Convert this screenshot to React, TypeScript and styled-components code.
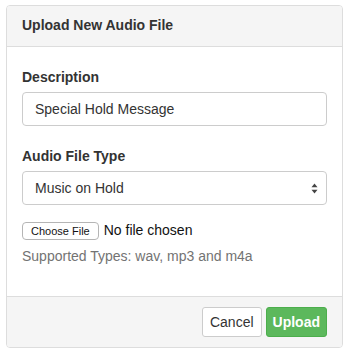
import React, { useState } from "react";
import styled, { createGlobalStyle } from "styled-components";

const GlobalStyle = createGlobalStyle`
  html, body {
    margin: 0;
    padding: 0;
    background: #fff;
  }
  body {
    font-family: "Liberation Sans", Arial, sans-serif;
    font-size: 14px;
    line-height: 20px;
    color: #333;
  }
  * {
    box-sizing: border-box;
  }
`;

const Page = styled.div`
  padding: 5px 7px 7px 6px;
`;

const Panel = styled.div`
  border: 1px solid #ddd;
  border-radius: 4px;
  background: #fff;
  overflow: hidden;
`;

const Heading = styled.div`
  background: #f5f5f5;
  border-bottom: 1px solid #ddd;
  padding: 9px 15px 10px;
  height: 41px;
`;

const Title = styled.h3`
  margin: 0;
  font-size: 14px;
  line-height: 20px;
  font-weight: bold;
  color: #333;
`;

const Body = styled.div`
  padding: 20px 15px 30px;
`;

const FormGroup = styled.div<{ $gap?: number }>`
  margin-bottom: ${(p) => p.$gap ?? 20}px;
`;

const Label = styled.label`
  display: block;
  margin-bottom: 5px;
  font-weight: bold;
  color: #333;
`;

const TextInput = styled.input`
  display: block;
  width: 100%;
  height: 34px;
  padding: 6px 12px;
  font-family: inherit;
  font-size: 14px;
  color: #333;
  border: 1px solid #ccc;
  border-radius: 4px;
  outline: none;
  background: #fff;
`;

const SelectWrap = styled.div`
  position: relative;
`;

const Select = styled.select`
  display: block;
  width: 100%;
  height: 34px;
  padding: 6px 12px;
  font-family: inherit;
  font-size: 14px;
  color: #333;
  border: 1px solid #ccc;
  border-radius: 4px;
  background: #fff;
  appearance: none;
  -webkit-appearance: none;
  outline: none;
`;

const Arrows = styled.svg`
  position: absolute;
  right: 9px;
  top: 12px;
  pointer-events: none;
`;

const FileRow = styled.div`
  display: flex;
  align-items: center;
  gap: 5px;
  height: 21px;
`;

const FileButton = styled.button`
  height: 18px;
  margin-top: 1px;
  padding: 0 8px;
  font-family: inherit;
  font-size: 11px;
  line-height: 16px;
  color: #111;
  background: #fff;
  border: 1px solid #b5b5b5;
  border-radius: 4px;
  cursor: pointer;
`;

const FileName = styled.span`
  font-size: 14px;
  color: #111;
  margin-top: -2px;
`;

const Help = styled.p`
  margin: 5px 0 0;
  color: #737373;
`;

const Footer = styled.div`
  display: flex;
  justify-content: flex-end;
  gap: 4px;
  padding: 10px 15px;
  background: #f5f5f5;
  border-top: 1px solid #ddd;
`;

const Button = styled.button<{ $primary?: boolean }>`
  height: 30px;
  padding: 0 ${(p) => (p.$primary ? 6 : 7)}px;
  font-family: inherit;
  font-size: 14px;
  font-weight: ${(p) => (p.$primary ? "bold" : "normal")};
  color: ${(p) => (p.$primary ? "#fff" : "#333")};
  background: ${(p) => (p.$primary ? "#5cb85c" : "#fff")};
  border: 1px solid ${(p) => (p.$primary ? "#4cae4c" : "#ccc")};
  border-radius: 3px;
  cursor: pointer;
`;

export default function App() {
  const [description, setDescription] = useState("Special Hold Message");
  const [type, setType] = useState("moh");

  return (
    <Page>
      <GlobalStyle />
      <Panel>
        <Heading>
          <Title>Upload New Audio File</Title>
        </Heading>
        <Body>
          <FormGroup>
            <Label>Description</Label>
            <TextInput
              value={description}
              onChange={(e) => setDescription(e.target.value)}
            />
          </FormGroup>
          <FormGroup $gap={15}>
            <Label>Audio File Type</Label>
            <SelectWrap>
              <Select value={type} onChange={(e) => setType(e.target.value)}>
                <option value="moh">Music on Hold</option>
                <option value="greeting">Greeting</option>
              </Select>
              <Arrows width="7" height="11" viewBox="0 0 7 11">
                <path d="M3.5 0.5 L6.5 4.2 L0.5 4.2 Z" fill="#444" />
                <path d="M3.5 10.5 L6.5 6.8 L0.5 6.8 Z" fill="#444" />
              </Arrows>
            </SelectWrap>
          </FormGroup>
          <FileRow>
            <FileButton>Choose File</FileButton>
            <FileName>No file chosen</FileName>
          </FileRow>
          <Help>Supported Types: wav, mp3 and m4a</Help>
        </Body>
        <Footer>
          <Button>Cancel</Button>
          <Button $primary>Upload</Button>
        </Footer>
      </Panel>
    </Page>
  );
}
